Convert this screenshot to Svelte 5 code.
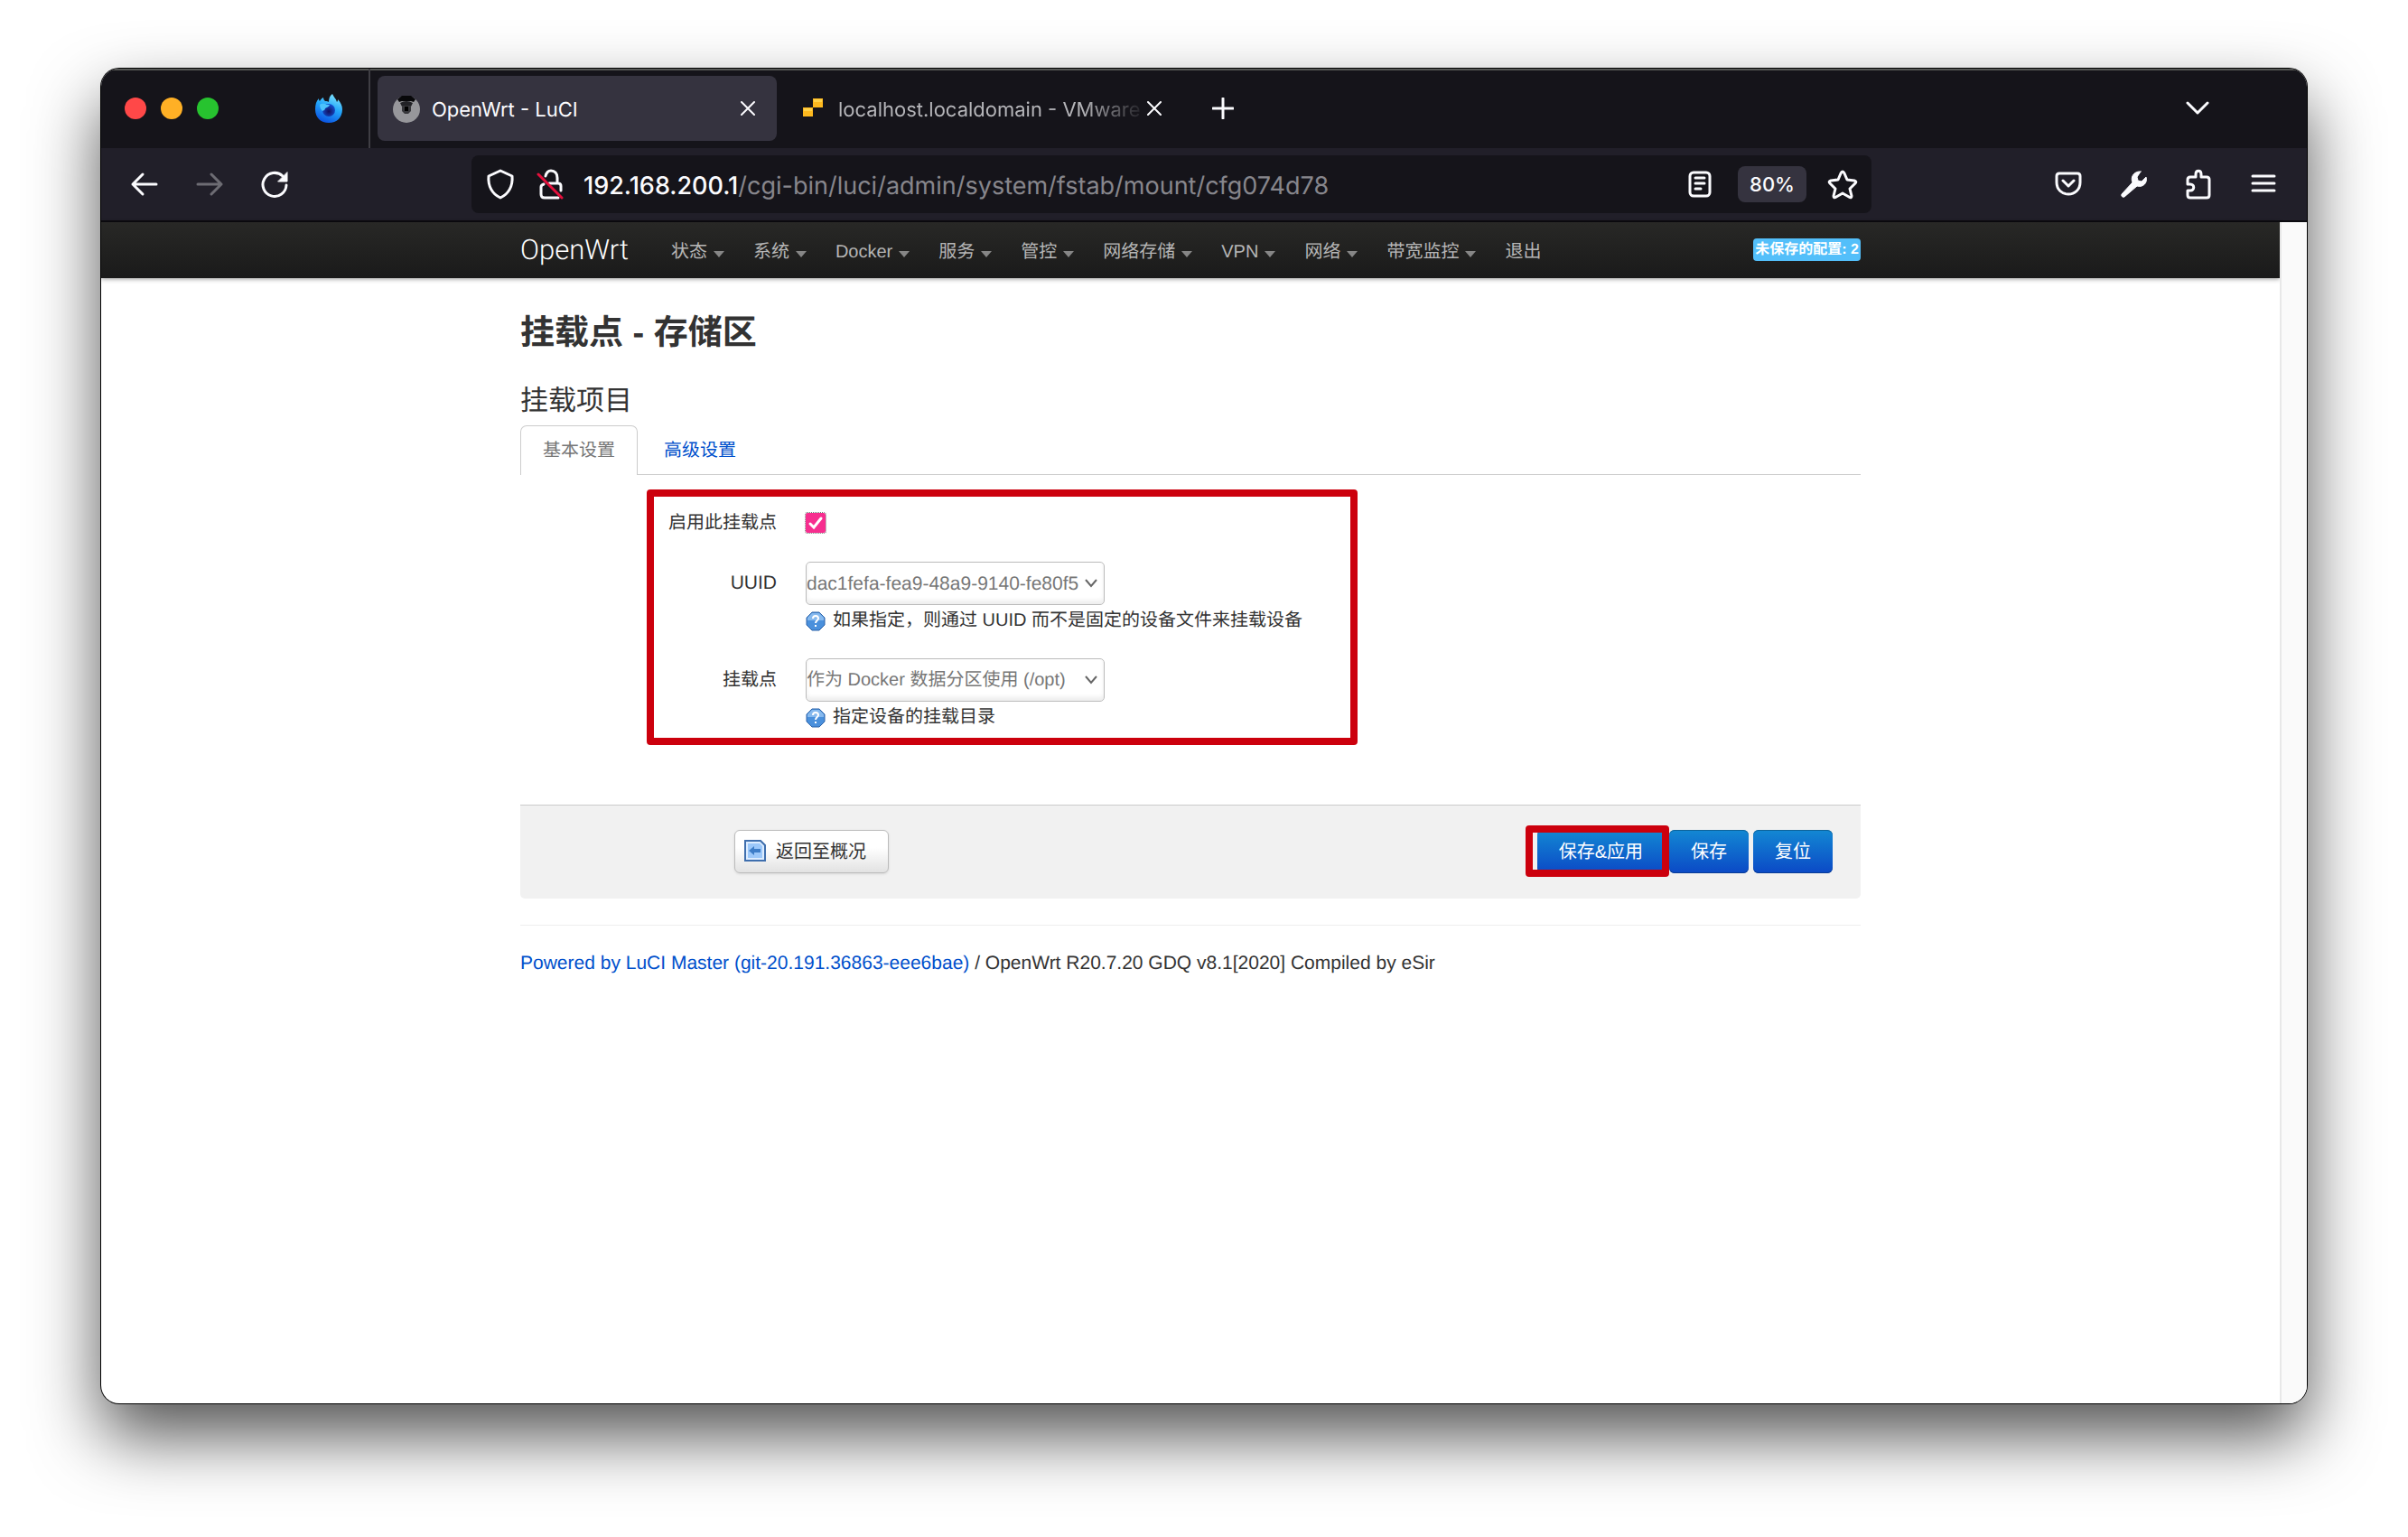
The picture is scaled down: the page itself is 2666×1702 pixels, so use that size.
<script>
  const menu = [
    { label: "状态", caret: true },
    { label: "系统", caret: true },
    { label: "Docker", caret: true },
    { label: "服务", caret: true },
    { label: "管控", caret: true },
    { label: "网络存储", caret: true },
    { label: "VPN", caret: true },
    { label: "网络", caret: true },
    { label: "带宽监控", caret: true },
    { label: "退出", caret: false }
  ];

  let enabled = true;
</script>

<main>
  <div class="window">
    <header class="tabs">
      <div class="lights">
        <button class="light red" aria-label="Close window"></button>
        <button class="light yellow" aria-label="Minimize window"></button>
        <button class="light green" aria-label="Zoom window"></button>
      </div>
      <button class="view" aria-label="Firefox View">
        <svg width="32" height="32" viewBox="0 0 32 32">
          <defs>
            <linearGradient id="flame" x1="0.7" y1="0" x2="0.3" y2="1">
              <stop offset="0" stop-color="#7fe3fd" />
              <stop offset="0.45" stop-color="#24a8fb" />
              <stop offset="1" stop-color="#0a4fe0" />
            </linearGradient>
            <radialGradient id="globe" cx="0.5" cy="0.6" r="0.6">
              <stop offset="0" stop-color="#120f5c" />
              <stop offset="1" stop-color="#1553d6" />
            </radialGradient>
          </defs>
          <path fill="url(#flame)" d="M20 0c1 3 4 5 5 9 1-1 1-2 1-3 3 3 5 7 5 11 0 9-6 15-15 15S1 26 1 17c0-5 1-9 4-12 0 1 0 2 1 3 1-2 2-3 4-4 0 2 1 3 2 4 2 0 3 0 4 1 0-4 1-7 4-9z" />
          <circle cx="16" cy="18" r="7" fill="url(#globe)" />
          <path fill="#4cc3fd" d="M6 12c3-2 6-1 7 0h4c-1 3-4 3-5 4 0 2-2 2-3 3 0 0-3-3-3-7z" />
        </svg>
      </button>
      <div class="tab active">
        <svg width="32" height="32" viewBox="0 0 32 32">
          <circle cx="16" cy="17" r="15" fill="#97979b" />
          <path d="M6 6l5-4h10l5 4-2 3-3-1H11L8 9z" fill="#08080a" />
          <path d="M9 10q7-4 14 0l-2 4H11z" fill="#222226" />
          <path d="M11 13h10v6l-3 3h-4l-3-3z" fill="#38383c" />
          <path d="M14 14h4v5h-4z" fill="#000" />
        </svg>
        <span class="title">OpenWrt - LuCI</span>
        <button class="close" aria-label="Close tab">
          <svg width="16" height="16" viewBox="0 0 16 16"><path d="M1 1l14 14M15 1L1 15" /></svg>
        </button>
      </div>
      <div class="tab next">
        <svg width="32" height="32" viewBox="0 0 32 32">
          <path fill="#fdb91f" d="M16 5h11v10H16zM5 15h11v10H5z" />
          <path fill="#ffd24a" d="M17 6h9v3h-9zM6 16h9v3H6z" />
        </svg>
        <span class="title faded">localhost.localdomain - VMware</span>
        <button class="close" aria-label="Close tab">
          <svg width="16" height="16" viewBox="0 0 16 16"><path d="M1 1l14 14M15 1L1 15" /></svg>
        </button>
      </div>
      <button class="add" aria-label="New tab">
        <svg width="24" height="24" viewBox="0 0 24 24"><path d="M12 1v22M1 12h22" /></svg>
      </button>
      <button class="list" aria-label="List all tabs">
        <svg width="26" height="26" viewBox="0 0 26 26"><path d="M2 7l11 11L24 7" /></svg>
      </button>
    </header>

    <div class="toolbar">
      <div class="history">
        <button aria-label="Back">
          <svg width="32" height="32" viewBox="0 0 32 32"><path d="M29 16H3M14 5L3 16l11 11" /></svg>
        </button>
        <button class="off" aria-label="Forward">
          <svg width="32" height="32" viewBox="0 0 32 32"><path d="M3 16h26M18 5l11 11-11 11" /></svg>
        </button>
        <button aria-label="Reload">
          <svg width="32" height="32" viewBox="0 0 32 32">
            <path d="M29 17A13 13 0 1 1 25 7" />
            <path class="solid" d="M30 3v10H20z" />
          </svg>
        </button>
      </div>
      <div class="address">
        <svg width="32" height="34" viewBox="0 0 32 34"><path d="M16 2L29 8c1 11-4 20-13 24C7 28 2 19 3 8z" /></svg>
        <svg class="lock" width="32" height="34" viewBox="0 0 32 34">
          <path d="M10 8c1-4 3-6 6-6 4 0 7 3 7 8v6M14 16h10q3 0 3 3v5M8 17q-3 1-3 3v8q0 4 4 4h15" />
          <path class="strike" d="M2 6l26 26" />
        </svg>
        <div class="url"><b>192.168.200.1</b>/cgi-bin/luci/admin/system/fstab/mount/cfg074d78</div>
        <svg width="32" height="32" viewBox="0 0 32 32">
          <rect x="5" y="3" width="22" height="26" rx="4" />
          <path d="M11 9h10M11 15h10M11 21h6" />
        </svg>
        <button class="zoom">80%</button>
        <svg width="36" height="34" viewBox="0 0 36 34"><path d="M18 3q1 0 2 2l3 7 8 1q3 1 1 3l-6 6 2 8q0 3-3 1l-7-4-7 4q-3 2-3-1l2-8-6-6q-2-2 1-3l8-1 3-7q1-2 2-2z" /></svg>
      </div>
      <div class="tools">
        <button aria-label="Save to Pocket">
          <svg width="32" height="32" viewBox="0 0 32 32">
            <path d="M6 4h20q3 0 3 3v7c0 8-6 13-13 13S3 22 3 14V7q0-3 3-3z" />
            <path d="M10 12l6 6 6-6" />
          </svg>
        </button>
        <button aria-label="Developer tools">
          <svg width="32" height="32" viewBox="0 0 32 32">
            <path class="solid" d="M24 2l-4 6 1 4 4 1 5-5c2 6-3 12-10 10L6 30c-2 1-4-1-3-3l12-13C12 7 18 1 24 2z" />
          </svg>
        </button>
        <button aria-label="Extensions">
          <svg width="32" height="34" viewBox="0 0 32 34"><path d="M13 9V6c0-5 6-5 6 0v3h6q3 0 3 3v17q0 3-3 3H7q-3 0-3-3v-5h3c5 0 5-7 0-7H4v-5q0-3 3-3z" /></svg>
        </button>
        <button aria-label="Menu">
          <svg width="32" height="32" viewBox="0 0 32 32"><path d="M4 7h24M4 15h24M4 23h24" /></svg>
        </button>
      </div>
    </div>

    <div class="viewport">
      <div class="page">
        <nav>
          <div class="container">
            <a class="brand" href="#home">OpenWrt</a>
            <ul>
              {#each menu as item}
                <li><a href="#menu">{item.label}{#if item.caret}<i class="caret"></i>{/if}</a></li>
              {/each}
            </ul>
            <a class="badge" href="#changes">未保存的配置: 2</a>
          </div>
        </nav>

        <div class="container content">
          <h2>挂载点 - 存储区</h2>
          <h3>挂载项目</h3>
          <div class="sections">
            <a class="section current" href="#general">基本设置</a>
            <a class="section" href="#advanced">高级设置</a>
          </div>

          <form>
            <div class="row check">
              <label for="enabled">启用此挂载点</label>
              <div class="field">
                <input id="enabled" type="checkbox" bind:checked={enabled} />
              </div>
            </div>
            <div class="row">
              <label class="latin" for="uuid">UUID</label>
              <div class="field">
                <div class="select">
                  <select id="uuid" class="latin"><option>dac1fefa-fea9-48a9-9140-fe80f5</option></select>
                  <svg width="16" height="16" viewBox="0 0 16 16"><path d="M2 4l6 7 6-7" /></svg>
                </div>
                <p>
                  {@render help()}
                  如果指定，则通过 UUID 而不是固定的设备文件来挂载设备
                </p>
              </div>
            </div>
            <div class="row">
              <label for="target">挂载点</label>
              <div class="field">
                <div class="select">
                  <select id="target"><option>作为 Docker 数据分区使用 (/opt)</option></select>
                  <svg width="16" height="16" viewBox="0 0 16 16"><path d="M2 4l6 7 6-7" /></svg>
                </div>
                <p>
                  {@render help()}
                  指定设备的挂载目录
                </p>
              </div>
            </div>
            <div class="mark"></div>
          </form>

          <div class="actions">
            <button class="btn back">
              <svg width="24" height="24" viewBox="0 0 24 24">
                <path d="M1 1h17l5 5v17H1z" fill="#dcecff" stroke="#3f6fae" stroke-width="2" />
                <path d="M4 4h13l3 3v13H4z" fill="#9cc8fa" />
                <path d="M5 12l6-5v3h7v4h-7v3z" fill="#3d7dc8" />
              </svg>
              返回至概况
            </button>
            <div class="save">
              <div class="apply">
                <button class="btn primary">保存&amp;应用</button>
                <div class="mark"></div>
              </div>
              <button class="btn primary">保存</button>
              <button class="btn primary">复位</button>
            </div>
          </div>

          <footer>
            <a href="#luci">Powered by LuCI Master (git-20.191.36863-eee6bae)</a> / OpenWrt R20.7.20 GDQ v8.1[2020] Compiled by eSir
          </footer>
        </div>
      </div>
      <div class="scrollbar"></div>
    </div>
  </div>
</main>

{#snippet help()}
  <svg width="22" height="22" viewBox="0 0 22 22">
    <path d="M7 1h8l6 6v8l-6 6H7l-6-6V7z" fill="#4a90dc" stroke="#2c62a8" stroke-width="1" />
    <path d="M7 2h8l5 5v3H2V7z" fill="#86b9ee" />
    <path d="M8 8c0-4 6-4 6 0 0 2-3 2-3 5M11 15v2" fill="none" stroke="#fff" stroke-width="2" />
  </svg>
{/snippet}

<style>
  :global(body) {
    margin: 0;
    background: #fff;
  }

  main {
    box-sizing: border-box;
    min-height: 100vh;
    display: flex;
    padding: 76px 112px 148px;
    font-family: "Liberation Sans", "Noto Sans CJK SC", sans-serif;
    font-size: 20px;
    text-rendering: geometricPrecision;
    color: #333;
  }

  .window {
    flex: 1;
    display: flex;
    flex-direction: column;
    border-radius: 20px;
    overflow: hidden;
    background: #fff;
    box-shadow: 0 0 0 1px #000, 0 36px 76px rgba(0, 0, 0, 0.68);
  }

  button {
    padding: 0;
    border: 0;
    background: none;
    font: inherit;
    color: inherit;
  }

  a {
    color: #0050cc;
    text-decoration: none;
  }

  svg {
    display: block;
    flex: none;
  }

  .tabs {
    display: flex;
    align-items: center;
    height: 88px;
    background: #15141a;
    box-shadow: inset 0 2px #555755;
    color: #fbfbfe;
    font-family: Inter, "Liberation Sans", sans-serif;
    font-size: 22px;
  }

  .tabs path,
  .toolbar path,
  .toolbar rect {
    stroke-linecap: round;
    stroke-linejoin: round;
  }

  .close path,
  .add path,
  .list path,
  .toolbar path,
  .toolbar rect {
    fill: none;
    stroke: #fbfbfe;
    stroke-width: 3;
  }

  .close path {
    stroke-width: 2;
  }

  .lights {
    display: flex;
    gap: 16px;
    padding-left: 26px;
  }

  .light {
    width: 24px;
    height: 24px;
    border-radius: 50%;
  }

  .red {
    background: #ff4848;
  }

  .yellow {
    background: #ffb025;
  }

  .green {
    background: #27c32f;
  }

  .view {
    align-self: stretch;
    display: flex;
    align-items: center;
    margin-left: 90px;
    padding: 0 28px 0 16px;
    border-right: 2px solid #3f3e44;
  }

  .tab {
    box-sizing: border-box;
    display: flex;
    align-items: center;
    width: 442px;
    height: 72px;
    padding: 0 16px;
    border-radius: 8px;
    color: #b5b5b9;
  }

  .active,
  .next {
    margin-left: 8px;
  }

  .active {
    background: #35333f;
    color: #fbfbfe;
  }

  .title {
    flex: 1;
    margin-left: 12px;
    padding-top: 4px;
    white-space: nowrap;
  }

  .faded {
    mask-image: linear-gradient(to left, transparent, #000 72px);
  }

  .close {
    padding: 8px 8px 8px 0;
  }

  .add {
    margin-left: 32px;
  }

  .list {
    margin-left: auto;
    margin-right: 108px;
  }

  .toolbar {
    display: flex;
    align-items: center;
    height: 80px;
    border-bottom: 2px solid #0c0b10;
    background: #211f29;
    color: #fbfbfe;
    font-family: Inter, "Liberation Sans", sans-serif;
  }

  .toolbar .solid {
    fill: #fbfbfe;
    stroke-width: 1;
  }

  .toolbar .strike {
    stroke: #e5103c;
  }

  .history {
    box-sizing: border-box;
    display: flex;
    gap: 40px;
    width: 410px;
    padding-left: 32px;
  }

  .address {
    box-sizing: border-box;
    display: flex;
    align-items: center;
    width: 1550px;
    height: 64px;
    padding: 0 14px 0 16px;
    border-radius: 8px;
    background: #15141a;
  }

  .off {
    opacity: 0.35;
  }

  .lock {
    margin-left: 24px;
  }

  .url {
    flex: 1;
    margin-left: 20px;
    padding-top: 2px;
    color: #87868c;
    font-size: 27px;
  }

  .url b {
    color: #fbfbfe;
    font-weight: 500;
  }

  .zoom {
    width: 76px;
    height: 40px;
    margin: 0 22px 0 26px;
    border-radius: 8px;
    background: #35333f;
    font-size: 22px;
    font-weight: 500;
  }

  .tools {
    display: flex;
    flex: 1;
    justify-content: flex-end;
    gap: 40px;
    padding-right: 32px;
  }

  .viewport {
    flex: 1;
    display: flex;
  }

  .page {
    flex: 1;
  }

  .scrollbar {
    width: 28px;
    border-left: 2px solid #e8e8e8;
    background: #fafafa;
  }

  nav {
    background: linear-gradient(#282826, #1a1a1a);
    box-shadow: 0 1px 5px rgba(0, 0, 0, 0.4);
  }

  .container {
    max-width: 1484px;
    margin: 0 auto;
  }

  nav .container {
    display: flex;
    align-items: center;
    height: 60px;
    padding-bottom: 2px;
  }

  .brand {
    margin-right: 31px;
    font-family: Roboto, sans-serif;
    font-size: 31px;
    font-weight: 300;
    color: #fff;
  }

  ul {
    display: flex;
    align-items: baseline;
    margin: 0;
    padding: 0;
    list-style: none;
  }

  li a {
    display: flex;
    align-items: baseline;
    padding: 0 16px;
    color: #b5b5b5;
  }

  .caret {
    margin-left: 7px;
    margin-bottom: 3px;
    border: 6px solid transparent;
    border-top: 7px solid #868686;
    border-bottom: 0;
  }

  .badge {
    margin-left: auto;
    padding: 0 2px;
    border-radius: 4px;
    background: #53bffa;
    color: #fff;
    font-size: 16px;
    font-weight: 700;
    line-height: 25px;
  }

  h2 {
    margin: 0;
    padding-top: 32px;
    font-size: 38px;
    line-height: 58px;
  }

  h3 {
    margin: 0;
    padding-top: 24px;
    font-size: 31px;
    font-weight: 400;
    line-height: 44px;
  }

  .sections {
    display: flex;
    gap: 4px;
    margin-top: 5px;
    border-bottom: 1px solid #ccc;
  }

  .section {
    margin-bottom: -1px;
    padding: 0 24px;
    border: 1px solid transparent;
    border-bottom: 0;
    border-radius: 7px 7px 0 0;
    line-height: 54px;
  }

  .current {
    border-color: #ccc;
    background: #fff;
    color: #777;
  }

  form {
    position: relative;
    padding: 34px 0 55px;
  }

  .row {
    display: grid;
    grid-template-columns: 284px 1fr;
    gap: 32px;
    margin-bottom: 24px;
  }

  label {
    text-align: right;
    line-height: 48px;
  }

  .check label {
    line-height: 38px;
  }

  .latin,
  footer {
    font-size: 21px;
  }

  .row p {
    display: flex;
    align-items: center;
    gap: 8px;
    margin: 0;
    line-height: 35px;
  }

  input {
    appearance: none;
    width: 22px;
    height: 22px;
    margin: 8px 0;
    border-radius: 2px;
    outline: 1px dotted #777;
    background: #f72e8f;
  }

  input:checked {
    background: #f72e8f url('data:image/svg+xml,<svg xmlns="http://www.w3.org/2000/svg" viewBox="0 0 22 22"><path d="M5 12l4 4 8-10" fill="none" stroke="white" stroke-width="3" stroke-linecap="round"/></svg>');
  }

  .field {
    display: flex;
    flex-direction: column;
    align-items: flex-start;
  }

  .select {
    display: grid;
    align-items: center;
  }

  .select > * {
    grid-area: 1 / 1;
  }

  .select svg {
    justify-self: end;
    margin-right: 7px;
    pointer-events: none;
  }

  .select path {
    fill: none;
    stroke: #666;
    stroke-width: 2;
  }

  select {
    appearance: none;
    width: 331px;
    height: 48px;
    padding: 0;
    border: 1px solid #bbb;
    border-radius: 5px;
    background: #fff;
    box-shadow: inset 0 -4px 5px rgba(0, 0, 0, 0.07);
    color: #777;
    font-family: inherit;
    font-size: 20px;
    text-rendering: inherit;
  }

  select.latin {
    font-size: 21px;
  }

  .mark {
    position: absolute;
    top: 16px;
    left: 140px;
    width: 771px;
    height: 267px;
    border: 8px solid #cc000d;
    border-radius: 4px;
    pointer-events: none;
  }

  .actions {
    display: flex;
    justify-content: space-between;
    padding: 27px 31px 28px 237px;
    border-top: 1px solid #ccc;
    border-radius: 0 0 5px 5px;
    background: #f1f1f1;
  }

  .btn {
    box-sizing: border-box;
    height: 48px;
    padding: 0 24px 3px;
    border-radius: 6px;
  }

  .back {
    display: flex;
    align-items: center;
    gap: 11px;
    padding-left: 10px;
    border: 1px solid #bbb;
    background: linear-gradient(#fff, #fff 40%, #e2e2e2);
    box-shadow: 0 1px 3px rgba(0, 0, 0, 0.1);
  }

  .save {
    display: flex;
    gap: 5px;
  }

  .primary {
    background: linear-gradient(#1388d3, #0b49c6);
    box-shadow: inset 0 1px #0d6399, inset 0 -1px #0a3c94;
    color: #fff;
  }

  .apply {
    position: relative;
  }

  .apply .mark {
    top: -5px;
    left: -13px;
    right: -5px;
    bottom: -4px;
    width: auto;
    height: auto;
  }

  footer {
    margin-top: 29px;
    padding-top: 28px;
    border-top: 1px solid #eee;
    line-height: 28px;
  }
</style>
